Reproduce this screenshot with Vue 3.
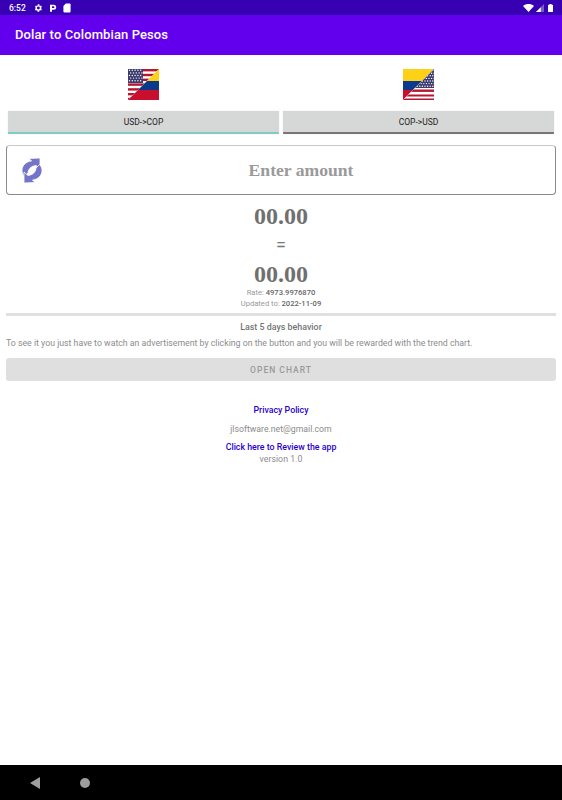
<script setup>
const stripes = [0, 4.8, 9.6, 14.4, 19.2, 24, 28.8]
const stars = []
for (let r = 0; r < 5; r++) {
  for (let c = 0; c < 5; c++) {
    stars.push({ x: 1.5 + c * 2.8 + (r % 2) * 1.2, y: 1.3 + r * 2.6 })
  }
}
</script>

<template>
  <div class="screen">
    <div class="status-bar">
      <div class="status-left">
        <span class="clock">6:52</span>
        <svg class="st-icon" viewBox="0 0 24 24" width="10" height="10">
          <path fill="#fff" d="M19.400 13a7.500 7.500 0 0 0 0-2l2.100-1.600-2-3.500-2.500 1a7.500 7.500 0 0 0-1.700-1L15.400 3.200h-4l-.4 2.700a7.500 7.500 0 0 0-1.700 1l-2.500-1-2 3.500L6.400 11a7.500 7.500 0 0 0 0 2l-2.100 1.600 2 3.500 2.500-1a7.500 7.500 0 0 0 1.700 1l.4 2.700h4l.4-2.700a7.500 7.500 0 0 0 1.700-1l2.500 1 2-3.500zM12.900 15.500a3.500 3.500 0 1 1 0-7 3.500 3.500 0 0 1 0 7z" />
        </svg>
        <svg class="st-icon" viewBox="0 0 12 12" width="8" height="10">
          <path fill="#fff" fill-rule="evenodd" d="M1.500 1H7a3.800 3.800 0 0 1 0 7.600H4.500V11.500h-3zM4.500 3.500v2.600H6.800a1.300 1.300 0 0 0 0-2.600z" />
        </svg>
        <svg class="st-icon" viewBox="0 0 10 12" width="8" height="10">
          <path fill="#fff" d="M3.500.5H8.500a1 1 0 0 1 1 1v9a1 1 0 0 1-1 1h-7a1 1 0 0 1-1-1V3.500z" />
        </svg>
      </div>
      <div class="status-right">
        <svg viewBox="0 0 14 10" width="11" height="8">
          <path fill="#fff" d="M0 2.500C4-.8 10-.8 14 2.500L7 10z" />
        </svg>
        <svg viewBox="0 0 10 10" width="8" height="8">
          <path fill="#fff" fill-opacity=".35" d="M0 10L10 0v10z" />
          <path fill="#fff" d="M0 10l6-6v6z" />
        </svg>
        <svg viewBox="0 0 7 11" width="5" height="10" class="battery">
          <path fill="#fff" d="M2 0h3v1h1.200a.8.8 0 0 1 .8.800V10.200a.8.8 0 0 1-.8.800H.8a.8.8 0 0 1-.8-.8V1.800A.8.8 0 0 1 .8 1H2z" />
        </svg>
      </div>
    </div>

    <header class="app-bar">Dolar to Colombian Pesos</header>

    <main class="content">
      <div class="flags">
        <div class="flag-cell">
          <svg class="flag" viewBox="0 0 31 31" width="31" height="31">
            <defs>
              <clipPath id="usTop"><polygon points="0,0 31,0 0,31" /></clipPath>
              <clipPath id="coBottom"><polygon points="31,0 31,31 0,31" /></clipPath>
            </defs>
            <g clip-path="url(#usTop)">
              <rect width="31" height="31" fill="#fff" />
              <rect v-for="y in stripes" :key="y" x="0" :y="y" width="31" height="2.400" fill="#b5172f" />
              <rect width="15" height="14" fill="#3c3b6e" />
              <circle v-for="(s, i) in stars" :key="i" :cx="s.x" :cy="s.y" r=".7" fill="#fff" />
            </g>
            <g clip-path="url(#coBottom)">
              <rect width="31" height="12" fill="#fcd116" />
              <rect y="12" width="31" height="9" fill="#0a3a8c" />
              <rect y="21" width="31" height="10" fill="#c8102e" />
            </g>
          </svg>
        </div>
        <div class="flag-cell">
          <svg class="flag" viewBox="0 0 31 31" width="31" height="31">
            <defs>
              <clipPath id="coTop"><polygon points="0,0 31,0 0,31" /></clipPath>
              <clipPath id="usBottom"><polygon points="31,0 31,31 0,31" /></clipPath>
            </defs>
            <g clip-path="url(#coTop)">
              <rect width="31" height="12" fill="#fcd116" />
              <rect y="12" width="31" height="9" fill="#0a3a8c" />
              <rect y="21" width="31" height="10" fill="#c8102e" />
            </g>
            <g clip-path="url(#usBottom)">
              <rect width="31" height="31" fill="#fff" />
              <rect y="20.500" width="31" height="2.400" fill="#b5172f" />
              <rect y="25.500" width="31" height="2" fill="#b5172f" />
              <rect y="29.500" width="31" height="1.500" fill="#b5172f" />
              <rect width="31" height="19" fill="#3c3b6e" />
              <template v-for="r in 7" :key="r">
                <circle v-for="c in 12" :key="c" :cx="c * 2.600 + (r % 2) * 1.200" :cy="r * 2.600 - 1" r=".7" fill="#fff" />
              </template>
            </g>
          </svg>
        </div>
      </div>

      <div class="tabs">
        <button class="tab tab-active">USD-&gt;COP</button>
        <button class="tab">COP-&gt;USD</button>
      </div>

      <div class="amount-box">
        <svg class="swap-icon" viewBox="0 0 20 25" width="20" height="25">
          <path fill="#7474c8" stroke="#fff" stroke-width=".8" d="M7 .5L18 0V11L14 7.500C10 8 6.500 10 6 15L2.500 18.500C1 17 0 15 0 12.500C0 7.500 4 3.500 9.500 3Z" />
          <path fill="#7474c8" stroke="#fff" stroke-width=".8" transform="rotate(180 10 12.500)" d="M7 .5L18 0V11L14 7.500C10 8 6.500 10 6 15L2.500 18.500C1 17 0 15 0 12.500C0 7.500 4 3.500 9.500 3Z" />
        </svg>
        <span class="amount-label">Enter amount</span>
      </div>

      <div class="result">
        <div class="big-value">00.00</div>
        <div class="equals">=</div>
        <div class="big-value second">00.00</div>
        <div class="meta">Rate: <b>4973.9976870</b></div>
        <div class="meta">Updated to: <b>2022-11-09</b></div>
      </div>

      <div class="divider"></div>

      <div class="chart-title">Last 5 days behavior</div>
      <p class="chart-desc">To see it you just have to watch an advertisement by clicking on the button and you will be rewarded with the trend chart.</p>
      <button class="open-chart" disabled>OPEN CHART</button>

      <div class="links">
        <a class="link privacy">Privacy Policy</a>
        <div class="mail">jlsoftware.net@gmail.com</div>
        <a class="link review">Click here to Review the app</a>
        <div class="version">version 1.0</div>
      </div>
    </main>

    <nav class="nav-bar">
      <svg viewBox="0 0 10 12" width="10" height="12" class="nav-back">
        <path fill="#9e9e9e" d="M0 6l10-6v12z" />
      </svg>
      <span class="nav-home"></span>
    </nav>
  </div>
</template>

<style>
body {
  margin: 0;
  background: #fff;
}
</style>

<style scoped>
.screen {
  width: 562px;
  height: 800px;
  display: flex;
  flex-direction: column;
  overflow: hidden;
  background: #fff;
  font-family: Roboto, "Liberation Sans", sans-serif;
}

.status-bar {
  height: 15px;
  flex: none;
  background: #3700b3;
  display: flex;
  align-items: center;
  justify-content: space-between;
  padding: 0 9px;
  color: #fff;
}

.status-left,
.status-right {
  display: flex;
  align-items: center;
}

.clock {
  font-size: 8.500px;
  font-weight: 500;
  margin-right: 7px;
}

.st-icon {
  margin-right: 6px;
}

.status-right {
  gap: 2px;
}

.battery {
  margin-left: 2px;
}

.app-bar {
  height: 40px;
  flex: none;
  background: #6200ee;
  color: #fff;
  font-size: 13px;
  font-weight: 500;
  letter-spacing: .1px;
  line-height: 40px;
  padding-left: 15px;
}

.content {
  flex: 1;
  padding: 0 6px;
}

.flags {
  display: flex;
  padding-top: 14px;
}

.flag-cell {
  flex: 1;
  display: flex;
  justify-content: center;
}

.flag {
  display: block;
}

.tabs {
  display: flex;
  gap: 4px;
  margin: 11px 2px 0 2px;
}

.tab {
  flex: 1;
  height: 23px;
  padding: 1px 0 0;
  border: none;
  border-bottom: 2px solid #767676;
  border-radius: 1px;
  background: #d6d7d7;
  color: #222;
  font-family: inherit;
  font-size: 8.500px;
  box-shadow: 0 0 1px rgba(0, 0, 0, .25);
}

.tab-active {
  border-bottom-color: #80cbc4;
}

.amount-box {
  position: relative;
  height: 48px;
  margin-top: 11px;
  padding-left: 40px;
  border: 1px solid #8a8a8a;
  border-top-color: #c8c8c8;
  border-radius: 4px;
  display: flex;
  align-items: center;
  justify-content: center;
}

.swap-icon {
  position: absolute;
  left: 15px;
  top: 12px;
}

.amount-label {
  font-family: "Liberation Serif", serif;
  font-size: 17.600px;
  font-weight: 700;
  color: #9a9a9a;
}

.result {
  text-align: center;
  color: #777;
}

.big-value {
  font-family: "Liberation Serif", serif;
  font-size: 24px;
  font-weight: 700;
  color: #707070;
  line-height: 28px;
  margin-top: 7px;
}

.second {
  margin-top: 1px;
}

.equals {
  font-size: 18px;
  line-height: 28px;
  margin-top: 1px;
  color: #777;
}

.meta {
  font-size: 7.600px;
  line-height: 10.500px;
  color: #999;
}

.meta b {
  color: #666;
  font-weight: 500;
}

.divider {
  height: 3px;
  background: #e0e0e0;
  margin-top: 4px;
}

.chart-title {
  text-align: center;
  font-size: 8.900px;
  font-weight: 500;
  color: #757575;
  line-height: 12px;
  margin-top: 5px;
}

.chart-desc {
  margin: 4px 0 0;
  font-size: 8.750px;
  line-height: 12px;
  color: #8c8c8c;
}

.open-chart {
  display: block;
  width: 100%;
  height: 23px;
  margin-top: 9px;
  border: none;
  border-radius: 3px;
  background: #dfdfdf;
  color: #9a9a9a;
  font-family: inherit;
  font-size: 8.500px;
  font-weight: 500;
  letter-spacing: 1px;
}

.links {
  text-align: center;
  margin-top: 23px;
  font-size: 8.800px;
  line-height: 12px;
}

.link {
  display: block;
  color: #2a00d0;
  font-weight: 500;
}

.mail {
  color: #8c8c8c;
  font-size: 8.700px;
  margin-top: 7px;
}

.review {
  margin-top: 6px;
}

.version {
  color: #8c8c8c;
}

.nav-bar {
  height: 35px;
  flex: none;
  background: #000;
  display: flex;
  align-items: center;
  padding-left: 30px;
}

.nav-back {
  margin-right: 40px;
}

.nav-home {
  width: 10px;
  height: 10px;
  border-radius: 50%;
  background: #9e9e9e;
}
</style>
